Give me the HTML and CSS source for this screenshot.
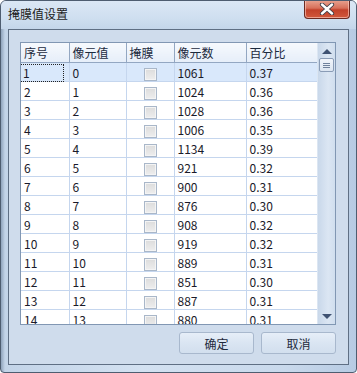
FILE: index.html
```html
<!DOCTYPE html>
<html lang="zh">
<head>
    <meta charset="UTF-8">
    <title>掩膜值设置</title>
    <link rel="stylesheet" href="styles.css">
</head>
<body>
    <div class="window">
        <div class="titleBar">
            <span class="title">掩膜值设置</span>
            <button class="closeBtn">
                <svg width="16" height="12" viewBox="0 0 16 12">
                    <path d="M3 1.5 L13 10.5 M13 1.5 L3 10.5" stroke="#3c3c46" stroke-width="4.2" stroke-linecap="round"/>
                    <path d="M3 1.5 L13 10.5 M13 1.5 L3 10.5" stroke="#fff" stroke-width="2.4" stroke-linecap="round"/>
                </svg>
            </button>
        </div>
        <div class="client">
            <div class="gridBox">
                <div class="gridScroll">
                    <table class="grid">
                        <colgroup>
                            <col style="width:48px">
                            <col style="width:57px">
                            <col style="width:48px">
                            <col style="width:72px">
                            <col style="width:72px">
                        </colgroup>
                        <thead>
                            <tr>
                                <th>序号</th>
                                <th>像元值</th>
                                <th>掩膜</th>
                                <th>像元数</th>
                                <th>百分比</th>
                            </tr>
                        </thead>
                        <tbody id="rows"></tbody>
                    </table>
                </div>
                <div class="scrollBar">
                    <span class="arrowUp"></span>
                    <span class="thumb"><i></i><i></i><i></i></span>
                    <span class="track"></span>
                    <span class="arrowDown"></span>
                </div>
            </div>
            <div class="buttons">
                <button class="dlgBtn">确定</button>
                <button class="dlgBtn">取消</button>
            </div>
        </div>
    </div>
    <script>
        const counts = [1061, 1024, 1028, 1006, 1134, 921, 900, 876, 908, 919, 889, 851, 887, 880];
        const pcts = ["0.37", "0.36", "0.36", "0.35", "0.39", "0.32", "0.31", "0.30", "0.32", "0.32", "0.31", "0.30", "0.31", "0.31"];
        const rows = document.getElementById("rows");
        counts.forEach((count, i) => {
            const tr = document.createElement("tr");
            if (i === 0) tr.classList.add("selected");
            tr.innerHTML = `<td><span class="${i === 0 ? "focus" : ""}">${i + 1}</span></td>
                <td>${i}</td>
                <td class="check"><span class="box"></span></td>
                <td>${count}</td>
                <td>${pcts[i]}</td>`;
            rows.appendChild(tr);
        });
    </script>
</body>
</html>
```

FILE: styles.css
```css
body {
    margin: 0;
    font-family: "Noto Sans CJK SC", "Noto Sans", sans-serif;
    font-size: 12px;
    color: #1a1a1a;
    background: #fff;
}

.window {
    width: 357px;
    height: 373px;
    box-sizing: border-box;
    border: 1px solid #4e5d70;
    border-radius: 6px 6px 4px 4px;
    background: linear-gradient(90deg, #8fa3bb 0px, #c3d4e8 4px, #d3e1f1 40%, #c9d9ec 80%, #b7cbe3 100%);
    display: flex;
    flex-direction: column;
    overflow: hidden;
}

.titleBar {
    height: 28px;
    display: flex;
    align-items: flex-start;
    justify-content: space-between;
    padding: 0 6px 0 7px;
    background: linear-gradient(180deg, #dbe7f5 0%, #cfdff0 60%, #c4d6ea 100%);
}

.title {
    margin-top: 4px;
    font-size: 12px;
    color: #1c1c1c;
}

.closeBtn {
    width: 46px;
    height: 19px;
    margin-top: -1px;
    border: 1px solid #6b2a22;
    border-top: none;
    border-radius: 0 0 4px 4px;
    background: linear-gradient(180deg, #e8a592 0%, #d7705a 45%, #c2412a 55%, #d1583c 100%);
    box-shadow: inset 0 0 0 1px rgba(255, 210, 200, 0.6);
    display: flex;
    align-items: center;
    justify-content: center;
    padding: 0;
}

.client {
    flex: 1;
    margin: 0 7px 7px 7px;
    border: 1px solid #5f6f84;
    background: #cfdcec;
    display: flex;
    flex-direction: column;
    padding: 12px 12px 10px 11px;
}

.gridBox {
    height: 281px;
    flex-shrink: 0;
    border: 1px solid #8197b3;
    background: #fff;
    display: flex;
    overflow: hidden;
}

.gridScroll {
    flex: 1;
    overflow: hidden;
}

.grid {
    border-collapse: collapse;
    table-layout: fixed;
    width: 297px;
}

.grid th {
    height: 19px;
    padding: 0 3px;
    text-align: left;
    font-weight: normal;
    color: #1c2a3e;
    background: linear-gradient(180deg, #f6f9fd 0%, #e6eef9 100%);
    border-right: 1px solid #93a7c2;
    border-bottom: 1px solid #93a7c2;
    white-space: nowrap;
}

.grid th:last-child {
    border-right: none;
}

.grid td {
    height: 18px;
    padding: 0 3px;
    border-right: 1px solid #c5d6ee;
    border-bottom: 1px solid #c5d6ee;
    color: #1a1a2a;
    white-space: nowrap;
}

.grid td:last-child {
    border-right: none;
}

.grid tr.selected td {
    background: #d9e8fb;
}

.focus {
    display: inline-block;
    width: 40px;
    margin-left: -3px;
    padding-left: 2px;
    line-height: 16px;
    outline: 1px dotted #222;
    outline-offset: 0;
}

.grid td.check {
    text-align: center;
    padding: 0;
}

.box {
    display: inline-block;
    width: 11px;
    height: 11px;
    vertical-align: middle;
    border: 1px solid #a9b7c9;
    background: linear-gradient(180deg, #dcdcdc 0%, #eeeeee 100%);
    box-shadow: inset 0 0 0 1px #f4f4f4;
}

.scrollBar {
    width: 17px;
    display: flex;
    flex-direction: column;
    align-items: center;
    background: linear-gradient(90deg, #c9d8ea 0%, #dbe6f3 60%, #d0deee 100%);
    border-left: 1px solid #dce6f2;
}

.arrowUp,
.arrowDown {
    width: 0;
    height: 0;
    border-left: 5px solid transparent;
    border-right: 5px solid transparent;
}

.arrowUp {
    margin-top: 6px;
    border-bottom: 5px solid #3f5272;
}

.arrowDown {
    margin-bottom: 5px;
    border-top: 5px solid #3f5272;
}

.thumb {
    width: 13px;
    height: 12px;
    margin-top: 4px;
    border: 1px solid #8a9cb6;
    border-radius: 2px;
    background: linear-gradient(180deg, #f1f5fb 0%, #dbe5f1 100%);
    display: flex;
    flex-direction: column;
    align-items: center;
    justify-content: center;
    gap: 1px;
}

.thumb i {
    display: block;
    width: 7px;
    height: 1px;
    background: #6f819c;
}

.track {
    flex: 1;
}

.buttons {
    display: flex;
    justify-content: flex-end;
    gap: 7px;
    margin-top: 7px;
}

.dlgBtn {
    width: 75px;
    height: 22px;
    border: 1px solid #a8b8cd;
    border-radius: 3px;
    background: linear-gradient(180deg, #e6eef8 0%, #dae5f2 50%, #d2dfee 100%);
    font-family: "Noto Sans CJK SC", "Noto Sans", sans-serif;
    font-size: 12px;
    color: #1e2a3c;
    padding: 0;
}
```
